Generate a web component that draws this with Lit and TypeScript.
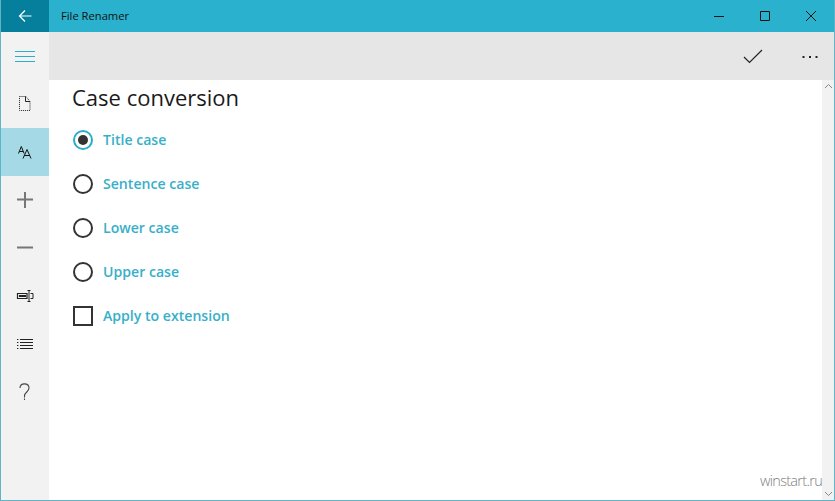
import { LitElement, html, css, svg } from "lit";
import { customElement } from "lit/decorators.js";

const icons = [
  svg`<svg width="48" height="48" viewBox="0 0 48 48" fill="none" stroke="#2aaecb" stroke-width="1"><path d="M14 19.5h20M14 24.5h20M14 29.5h20"/></svg>`,
  svg`<svg width="48" height="48" viewBox="0 0 48 48" fill="none" stroke="#222" stroke-width="1"><path d="M18.5 16.500h6.500l4 5v9h-10.500z" stroke-dasharray="1 1"/><path d="M24.500 16.500v5h4.500"/></svg>`,
  svg`<svg width="48" height="48" viewBox="0 0 48 48" fill="none" stroke="#111" stroke-width="1"><path d="M17.500 25.500l2.800-7 2.800 7M18.500 23.500h3.600"/><path d="M22 30.500l4-9 4 9M23.400 27.500h5.200"/></svg>`,
  svg`<svg width="48" height="48" viewBox="0 0 48 48" fill="none" stroke="#777" stroke-width="2"><path d="M24 16v16M16 23.500h16"/></svg>`,
  svg`<svg width="48" height="48" viewBox="0 0 48 48" fill="none" stroke="#777" stroke-width="2"><path d="M16 23.500h16"/></svg>`,
  svg`<svg width="48" height="48" viewBox="0 0 48 48" fill="none" stroke="#222"><path d="M16.500 21.500h9.500v5h-9.500z" stroke-width="1.200"/><path d="M18 24h7" stroke-width="2"/><path d="M26.500 18.500h3M26.500 29.500h3M28 18.500v11M29.500 21.500h2.500v5h-2.500" stroke-width="1"/></svg>`,
  svg`<svg width="48" height="48" viewBox="0 0 48 48" fill="none" stroke="#222" stroke-width="1"><path d="M19 19.500h13M19 22.500h13M19 25.500h13M19 28.500h13"/><path d="M16 19.500h2M16 22.500h2M16 25.500h2M16 28.500h2" stroke-dasharray="1 0.600"/></svg>`,
  svg`<svg width="48" height="48" viewBox="0 0 48 48" fill="none" stroke="#444" stroke-width="1.100"><path d="M19 20c0-5.500 9-5.500 9 0 0 4-4.500 4-4.500 8v1.500"/><path d="M23.500 30.500v1.500"/></svg>`,
];

@customElement("app-root")
export class AppRoot extends LitElement {
  static styles = css`
    :host { display: block; width: 835px; height: 501px; font-family: "Open Sans", "Noto Sans", sans-serif; }
    .win { width: 835px; height: 501px; box-sizing: border-box; display: flex; flex-direction: column; background: #fff; border: 1px solid #5fb4c6; border-top: 0; overflow: hidden; }
    .title { height: 32px; flex: none; background: #29b1cd; display: flex; align-items: center; margin: 0 -1px; padding-right: 1px; }
    .back { width: 49px; height: 32px; background: #067f9c; display: flex; align-items: center; justify-content: center; }
    .name { font-size: 11.2px; color: #111; margin-left: 12px; flex: 1; margin-top: -1px; }
    .ctl { width: 46px; height: 32px; display: flex; align-items: center; justify-content: center; }
    .body { flex: 1; display: flex; min-height: 0; }
    .side { width: 48px; background: #f2f2f2; flex: none; }
    .nav { height: 48px; display: block; }
    .nav svg { display: block; }
    .nav.on { background: #a5d9e6; }
    .main { flex: 1; display: flex; flex-direction: column; min-width: 0; }
    .cmd { height: 48px; flex: none; background: #e6e6e6; display: flex; justify-content: flex-end; align-items: center; }
    .cmd div { width: 67px; height: 48px; display: flex; align-items: center; justify-content: center; }
    .cmd div:last-child { width: 48px; }
    .content { flex: 1; display: flex; min-height: 0; position: relative; }
    .form { flex: 1; padding: 0 0 0 23px; }
    h1 { margin: 0; font-size: 22px; font-weight: 400; line-height: 34px; color: #1a1a1a; height: 38px; }
    .row { height: 44px; display: flex; align-items: center; gap: 10px; color: #38afc9; font-size: 14.1px; font-weight: 600; }
    .label { margin-top: -2px; }
    .radio { width: 20px; height: 20px; box-sizing: border-box; border: 2px solid #333; border-radius: 50%; display: flex; align-items: center; justify-content: center; flex: none; margin-left: 1px; }
    .radio.on { border-color: #2aaecb; }
    .radio.on::after { content: ""; width: 10px; height: 10px; border-radius: 50%; background: #333; }
    .check { width: 20px; height: 20px; box-sizing: border-box; border: 2px solid #333; flex: none; margin-left: 1px; }
    .scroll { width: 12px; background: #f2f2f2; flex: none; display: flex; flex-direction: column; justify-content: space-between; align-items: center; padding: 3px 0; box-sizing: border-box; }
    .mark { position: absolute; right: 12px; bottom: 10px; font-size: 14.5px; letter-spacing: -0.7px; font-weight: 300; color: #808080; }
  `;

  render() {
    const opts = ["Title case", "Sentence case", "Lower case", "Upper case"];
    return html`<div class="win">
      <div class="title">
        <div class="back"><svg width="16" height="16" viewBox="0 0 16 16" fill="none" stroke="#fff" stroke-width="1.200"><path d="M2.500 8h12M8 2.500L2.500 8 8 13.500"/></svg></div>
        <div class="name">File Renamer</div>
        <div class="ctl"><svg width="12" height="12" viewBox="0 0 12 12" stroke="#111" fill="none"><path d="M1 6.500h10"/></svg></div>
        <div class="ctl"><svg width="12" height="12" viewBox="0 0 12 12" stroke="#111" fill="none"><path d="M1.500 1.500h9v9h-9z"/></svg></div>
        <div class="ctl"><svg width="12" height="12" viewBox="0 0 12 12" stroke="#111" fill="none"><path d="M1 1l10 10M11 1L1 11"/></svg></div>
      </div>
      <div class="body">
        <div class="side">
          ${icons.map((ic, i) => html`<div class="nav ${i === 2 ? "on" : ""}">${ic}</div>`)}
        </div>
        <div class="main">
          <div class="cmd">
            <div><svg width="20" height="15" viewBox="0 0 20 15" fill="none" stroke="#222" stroke-width="1.200"><path d="M1 8l5.500 5.500L19 1"/></svg></div>
            <div><svg width="16" height="4" viewBox="0 0 16 4" fill="#222"><rect x="0.500" y="2" width="2" height="2"/><rect x="7" y="2" width="2" height="2"/><rect x="13.500" y="2" width="2" height="2"/></svg></div>
          </div>
          <div class="content">
            <div class="form">
              <h1>Case conversion</h1>
              ${opts.map((o, i) => html`<div class="row"><span class="radio ${i === 0 ? "on" : ""}"></span><span class="label">${o}</span></div>`)}
              <div class="row"><span class="check"></span><span class="label">Apply to extension</span></div>
            </div>
            <div class="scroll">
              <svg width="9" height="6" viewBox="0 0 9 6" fill="none" stroke="#888"><path d="M1 5l3.500-3.500L8 5"/></svg>
              <svg width="9" height="6" viewBox="0 0 9 6" fill="none" stroke="#888"><path d="M1 1l3.500 3.500L8 1"/></svg>
            </div>
            <div class="mark">winstart.ru</div>
          </div>
        </div>
      </div>
    </div>`;
  }
}
